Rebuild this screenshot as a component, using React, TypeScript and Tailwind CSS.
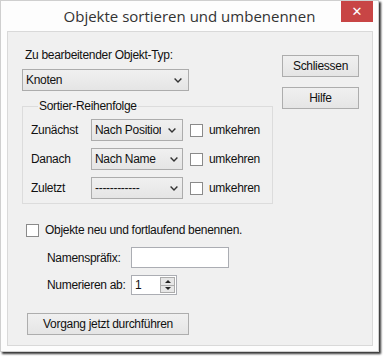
import type { ReactNode } from 'react'

const ui = "font-['Liberation_Sans',Arial,sans-serif] text-[12px] tracking-[-0.3px] text-[#111]"

function Chevron() {
  return (
    <svg width="8" height="5" viewBox="0 0 8 5" className="shrink-0">
      <path d="M0.6 0.6 L4 4 L7.4 0.6" fill="none" stroke="#333" strokeWidth="1.4" />
    </svg>
  )
}

function Combo({ value, width, textWidth }: { value: string; width: string; textWidth: string }) {
  return (
    <div
      className={`${width} flex h-[22px] items-center border border-[#acacac] bg-linear-to-b from-[#f0f0f0] to-[#e5e5e5] pl-[3px] pr-[6px]`}
    >
      <span className={`${textWidth} shrink-0 overflow-hidden whitespace-nowrap leading-[16px]`}>{value}</span>
      <span className="flex-1" />
      <Chevron />
    </div>
  )
}

function Button({ children, width }: { children: ReactNode; width: string }) {
  return (
    <div
      className={`${width} flex h-[22px] items-center justify-center border border-[#adadad] bg-linear-to-b from-[#f0f0f0] to-[#e5e5e5] leading-[16px]`}
    >
      {children}
    </div>
  )
}

function Check() {
  return <div className="h-[13px] w-[13px] shrink-0 border border-[#8a8a8a] bg-white" />
}

function SortRow({ label, value, textWidth }: { label: string; value: string; textWidth: string }) {
  return (
    <div className="flex h-[22px] items-center">
      <span className="w-[60px] leading-[16px]">{label}</span>
      <Combo value={value} width="w-[92px]" textWidth={textWidth} />
      <div className="ml-[7px] flex items-center gap-[6px]">
        <Check />
        <span className="leading-[16px]">umkehren</span>
      </div>
    </div>
  )
}

export default function App() {
  return (
    <div className="h-[358px] w-[385px] overflow-hidden bg-white">
      <div className="flex h-[352px] w-[379px] flex-col border border-[#cfcfcf] bg-[#fdfdfd] shadow-[2px_2px_2px_rgba(0,0,0,0.8)]">
        {/* title bar */}
        <div className="relative flex h-[30px] items-center justify-center">
          <span className="font-['Open_Sans',sans-serif] text-[15px] leading-[20px] text-[#333]">
            Objekte sortieren und umbenennen
          </span>
          <div className="absolute right-[5px] top-0 flex h-[21px] w-[32px] items-center justify-center bg-[#c84545] font-['DejaVu_Sans',sans-serif] text-[13px] leading-none text-white">
            ✕
          </div>
        </div>

        {/* client area */}
        <div className={`${ui} mb-[5px] ml-[6px] mr-[5px] flex flex-1 border border-[#d9d9d9] bg-[#f0f0f0]`}>
          <div className="ml-[14px] flex w-[251px] flex-col pt-[15px]">
            <span className="ml-[3px] leading-[16px]">Zu bearbeitender Objekt-Typ:</span>
            <div className="mt-[6px]">
              <Combo value="Knoten" width="w-[167px]" textWidth="w-[140px]" />
            </div>

            <fieldset className="mt-[7px] border border-[#dcdcdc] pb-[4px] pl-[8px]">
              <legend className="ml-[7px] px-[1px] leading-[16px]">Sortier-Reihenfolge</legend>
              <div className="mt-[5px] flex flex-col gap-[7px]">
                <SortRow label="Zunächst" value="Nach Position" textWidth="w-[66px]" />
                <SortRow label="Danach" value="Nach Name" textWidth="w-[75px]" />
                <SortRow label="Zuletzt" value="------------" textWidth="w-[75px]" />
              </div>
            </fieldset>

            <div className="ml-[4px] mt-[18px] flex h-[16px] items-center gap-[6px]">
              <Check />
              <span className="leading-[16px]">Objekte neu und fortlaufend benennen.</span>
            </div>

            <div className="ml-[25px] mt-[9px] flex h-[21px] items-center">
              <span className="w-[84px] leading-[16px]">Namenspräfix:</span>
              <div className="h-[21px] w-[98px] border border-[#abadb3] bg-white" />
            </div>

            <div className="ml-[25px] mt-[7px] flex h-[20px] items-center">
              <span className="w-[84px] leading-[16px]">Numerieren ab:</span>
              <div className="flex h-[20px] w-[46px] items-center border border-[#abadb3] bg-white">
                <span className="flex-1 pl-[3px] leading-[16px]">1</span>
                <div className="mr-[1px] flex h-[16px] w-[15px] flex-col">
                  <div className="flex flex-1 items-center justify-center border border-[#acacac] bg-[#e6e6e6]">
                    <svg width="6" height="3" viewBox="0 0 6 3">
                      <path d="M0 3 L3 0 L6 3 Z" fill="#222" />
                    </svg>
                  </div>
                  <div className="flex flex-1 items-center justify-center border border-t-0 border-[#acacac] bg-[#e6e6e6]">
                    <svg width="6" height="3" viewBox="0 0 6 3">
                      <path d="M0 0 L3 3 L6 0 Z" fill="#222" />
                    </svg>
                  </div>
                </div>
              </div>
            </div>

            <div className="ml-[5px] mt-[18px]">
              <Button width="w-[162px]">Vorgang jetzt durchführen</Button>
            </div>
          </div>

          <div className="ml-[9px] flex flex-col gap-[10px] pt-[23px]">
            <Button width="w-[77px]">Schliessen</Button>
            <Button width="w-[77px]">Hilfe</Button>
          </div>
        </div>
      </div>
    </div>
  )
}
